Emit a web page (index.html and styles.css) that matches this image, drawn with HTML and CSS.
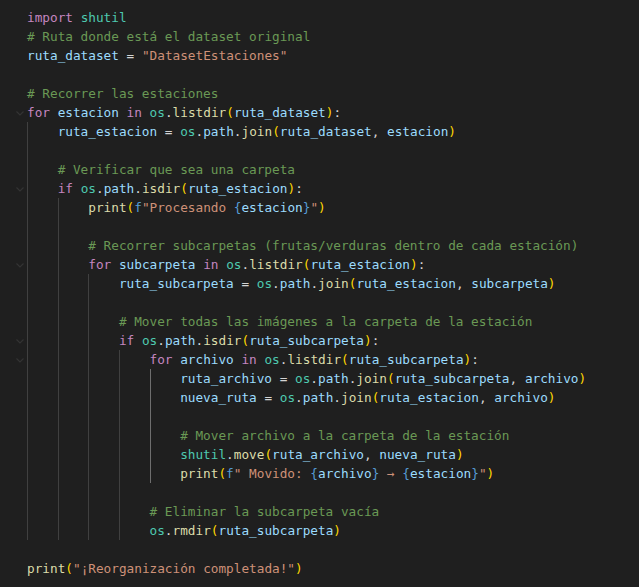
FILE: index.html
```html
<!DOCTYPE html>
<html lang="es">
<head>
<meta charset="utf-8">
<title>Reorganizar dataset</title>
<link rel="stylesheet" href="styles.css">
</head>
<body>
<div class="editor">
  <div class="ln"><span class="gut"></span><span class="code"><span class="kw">import</span> <span class="cls">shutil</span></span></div>
  <div class="ln"><span class="gut"></span><span class="code"><span class="cm"># Ruta donde está el dataset original</span></span></div>
  <div class="ln"><span class="gut"></span><span class="code"><span class="v">ruta_dataset</span> <span class="op">=</span> <span class="s">"DatasetEstaciones"</span></span></div>
  <div class="ln"><span class="gut"></span><span class="code"></span></div>
  <div class="ln"><span class="gut"></span><span class="code"><span class="cm"># Recorrer las estaciones</span></span></div>
  <div class="ln"><span class="gut"><svg class="fold" width="10" height="10" viewBox="0 0 10 10"><path d="M1.5 3.5 L5 7 L8.5 3.5" /></svg></span><span class="code"><span class="kw">for</span> <span class="v">estacion</span> <span class="kw">in</span> <span class="cls">os</span><span class="op">.</span><span class="fn">listdir</span><span class="b1">(</span><span class="v">ruta_dataset</span><span class="b1">)</span><span class="op">:</span></span></div>
  <div class="ln"><span class="gut"></span><span class="code"><span class="g"></span><span class="v">ruta_estacion</span> <span class="op">=</span> <span class="cls">os</span><span class="op">.</span><span class="v">path</span><span class="op">.</span><span class="fn">join</span><span class="b1">(</span><span class="v">ruta_dataset</span><span class="op">,</span> <span class="v">estacion</span><span class="b1">)</span></span></div>
  <div class="ln"><span class="gut"></span><span class="code"><span class="g"></span></span></div>
  <div class="ln"><span class="gut"></span><span class="code"><span class="g"></span><span class="cm"># Verificar que sea una carpeta</span></span></div>
  <div class="ln"><span class="gut"><svg class="fold" width="10" height="10" viewBox="0 0 10 10"><path d="M1.5 3.5 L5 7 L8.5 3.5" /></svg></span><span class="code"><span class="g"></span><span class="kw">if</span> <span class="cls">os</span><span class="op">.</span><span class="v">path</span><span class="op">.</span><span class="fn">isdir</span><span class="b1">(</span><span class="v">ruta_estacion</span><span class="b1">)</span><span class="op">:</span></span></div>
  <div class="ln"><span class="gut"></span><span class="code"><span class="g"></span><span class="g"></span><span class="fn">print</span><span class="b1">(</span><span class="fk">f</span><span class="s">"Procesando </span><span class="ph">{</span><span class="v">estacion</span><span class="ph">}</span><span class="s">"</span><span class="b1">)</span></span></div>
  <div class="ln"><span class="gut"></span><span class="code"><span class="g"></span><span class="g"></span></span></div>
  <div class="ln"><span class="gut"></span><span class="code"><span class="g"></span><span class="g"></span><span class="cm"># Recorrer subcarpetas (frutas/verduras dentro de cada estación)</span></span></div>
  <div class="ln"><span class="gut"><svg class="fold" width="10" height="10" viewBox="0 0 10 10"><path d="M1.5 3.5 L5 7 L8.5 3.5" /></svg></span><span class="code"><span class="g"></span><span class="g"></span><span class="kw">for</span> <span class="v">subcarpeta</span> <span class="kw">in</span> <span class="cls">os</span><span class="op">.</span><span class="fn">listdir</span><span class="b1">(</span><span class="v">ruta_estacion</span><span class="b1">)</span><span class="op">:</span></span></div>
  <div class="ln"><span class="gut"></span><span class="code"><span class="g"></span><span class="g"></span><span class="g"></span><span class="v">ruta_subcarpeta</span> <span class="op">=</span> <span class="cls">os</span><span class="op">.</span><span class="v">path</span><span class="op">.</span><span class="fn">join</span><span class="b1">(</span><span class="v">ruta_estacion</span><span class="op">,</span> <span class="v">subcarpeta</span><span class="b1">)</span></span></div>
  <div class="ln"><span class="gut"></span><span class="code"><span class="g"></span><span class="g"></span><span class="g"></span></span></div>
  <div class="ln"><span class="gut"></span><span class="code"><span class="g"></span><span class="g"></span><span class="g"></span><span class="cm"># Mover todas las imágenes a la carpeta de la estación</span></span></div>
  <div class="ln"><span class="gut"><svg class="fold" width="10" height="10" viewBox="0 0 10 10"><path d="M1.5 3.5 L5 7 L8.5 3.5" /></svg></span><span class="code"><span class="g"></span><span class="g"></span><span class="g"></span><span class="kw">if</span> <span class="cls">os</span><span class="op">.</span><span class="v">path</span><span class="op">.</span><span class="fn">isdir</span><span class="b1">(</span><span class="v">ruta_subcarpeta</span><span class="b1">)</span><span class="op">:</span></span></div>
  <div class="ln"><span class="gut"><svg class="fold" width="10" height="10" viewBox="0 0 10 10"><path d="M1.5 3.5 L5 7 L8.5 3.5" /></svg></span><span class="code"><span class="g"></span><span class="g"></span><span class="g"></span><span class="g"></span><span class="kw">for</span> <span class="v">archivo</span> <span class="kw">in</span> <span class="cls">os</span><span class="op">.</span><span class="fn">listdir</span><span class="b1">(</span><span class="v">ruta_subcarpeta</span><span class="b1">)</span><span class="op">:</span></span></div>
  <div class="ln"><span class="gut"></span><span class="code"><span class="g"></span><span class="g"></span><span class="g"></span><span class="g"></span><span class="g act"></span><span class="v">ruta_archivo</span> <span class="op">=</span> <span class="cls">os</span><span class="op">.</span><span class="v">path</span><span class="op">.</span><span class="fn">join</span><span class="b1">(</span><span class="v">ruta_subcarpeta</span><span class="op">,</span> <span class="v">archivo</span><span class="b1">)</span></span></div>
  <div class="ln"><span class="gut"></span><span class="code"><span class="g"></span><span class="g"></span><span class="g"></span><span class="g"></span><span class="g act"></span><span class="v">nueva_ruta</span> <span class="op">=</span> <span class="cls">os</span><span class="op">.</span><span class="v">path</span><span class="op">.</span><span class="fn">join</span><span class="b1">(</span><span class="v">ruta_estacion</span><span class="op">,</span> <span class="v">archivo</span><span class="b1">)</span></span></div>
  <div class="ln"><span class="gut"></span><span class="code"><span class="g"></span><span class="g"></span><span class="g"></span><span class="g"></span><span class="g act"></span></span></div>
  <div class="ln"><span class="gut"></span><span class="code"><span class="g"></span><span class="g"></span><span class="g"></span><span class="g"></span><span class="g act"></span><span class="cm"># Mover archivo a la carpeta de la estación</span></span></div>
  <div class="ln"><span class="gut"></span><span class="code"><span class="g"></span><span class="g"></span><span class="g"></span><span class="g"></span><span class="g act"></span><span class="cls">shutil</span><span class="op">.</span><span class="fn">move</span><span class="b1">(</span><span class="v">ruta_archivo</span><span class="op">,</span> <span class="v">nueva_ruta</span><span class="b1">)</span></span></div>
  <div class="ln"><span class="gut"></span><span class="code"><span class="g"></span><span class="g"></span><span class="g"></span><span class="g"></span><span class="g act"></span><span class="fn">print</span><span class="b1">(</span><span class="fk">f</span><span class="s">" Movido: </span><span class="ph">{</span><span class="v">archivo</span><span class="ph">}</span><span class="s"> → </span><span class="ph">{</span><span class="v">estacion</span><span class="ph">}</span><span class="s">"</span><span class="b1">)</span></span></div>
  <div class="ln"><span class="gut"></span><span class="code"><span class="g"></span><span class="g"></span><span class="g"></span><span class="g"></span></span></div>
  <div class="ln"><span class="gut"></span><span class="code"><span class="g"></span><span class="g"></span><span class="g"></span><span class="g"></span><span class="cm"># Eliminar la subcarpeta vacía</span></span></div>
  <div class="ln"><span class="gut"></span><span class="code"><span class="g"></span><span class="g"></span><span class="g"></span><span class="g"></span><span class="cls">os</span><span class="op">.</span><span class="fn">rmdir</span><span class="b1">(</span><span class="v">ruta_subcarpeta</span><span class="b1">)</span></span></div>
  <div class="ln"><span class="gut"></span><span class="code"></span></div>
  <div class="ln"><span class="gut"></span><span class="code"><span class="fn">print</span><span class="b1">(</span><span class="s">"¡Reorganización completada!"</span><span class="b1">)</span></span></div>
</div>
</body>
</html>
```

FILE: styles.css
```css
html, body {
  margin: 0;
  padding: 0;
  background: #1f1f1f;
  height: 100%;
}
.editor {
  padding-top: 8px;
  font-family: "DejaVu Sans Mono", "Liberation Mono", monospace;
  font-size: 12.72px;
  color: #d4d4d4;
}
.ln {
  display: flex;
  height: 19px;
  line-height: 19px;
  white-space: pre;
}
.gut {
  width: 27px;
  flex: none;
  display: flex;
  align-items: center;
  justify-content: flex-start;
  padding-left: 15px;
  box-sizing: border-box;
}
.fold {
  display: block;
}
.fold path {
  fill: none;
  stroke: #343434;
  stroke-width: 1.1;
}
.code {
  display: block;
}
.g {
  display: inline-block;
  width: 4ch;
  height: 19px;
  vertical-align: top;
  box-sizing: border-box;
  border-left: 1px solid #404040;
}
.g.act {
  border-left-color: #6e6e6e;
}
.kw { color: #c586c0; }
.cls { color: #4ec9b0; }
.cm { color: #6a9955; }
.v { color: #9cdcfe; }
.s { color: #ce9178; }
.fn { color: #dcdcaa; }
.op { color: #d4d4d4; }
.b1 { color: #ffd700; }
.fk { color: #569cd6; }
.ph { color: #569cd6; }
```
